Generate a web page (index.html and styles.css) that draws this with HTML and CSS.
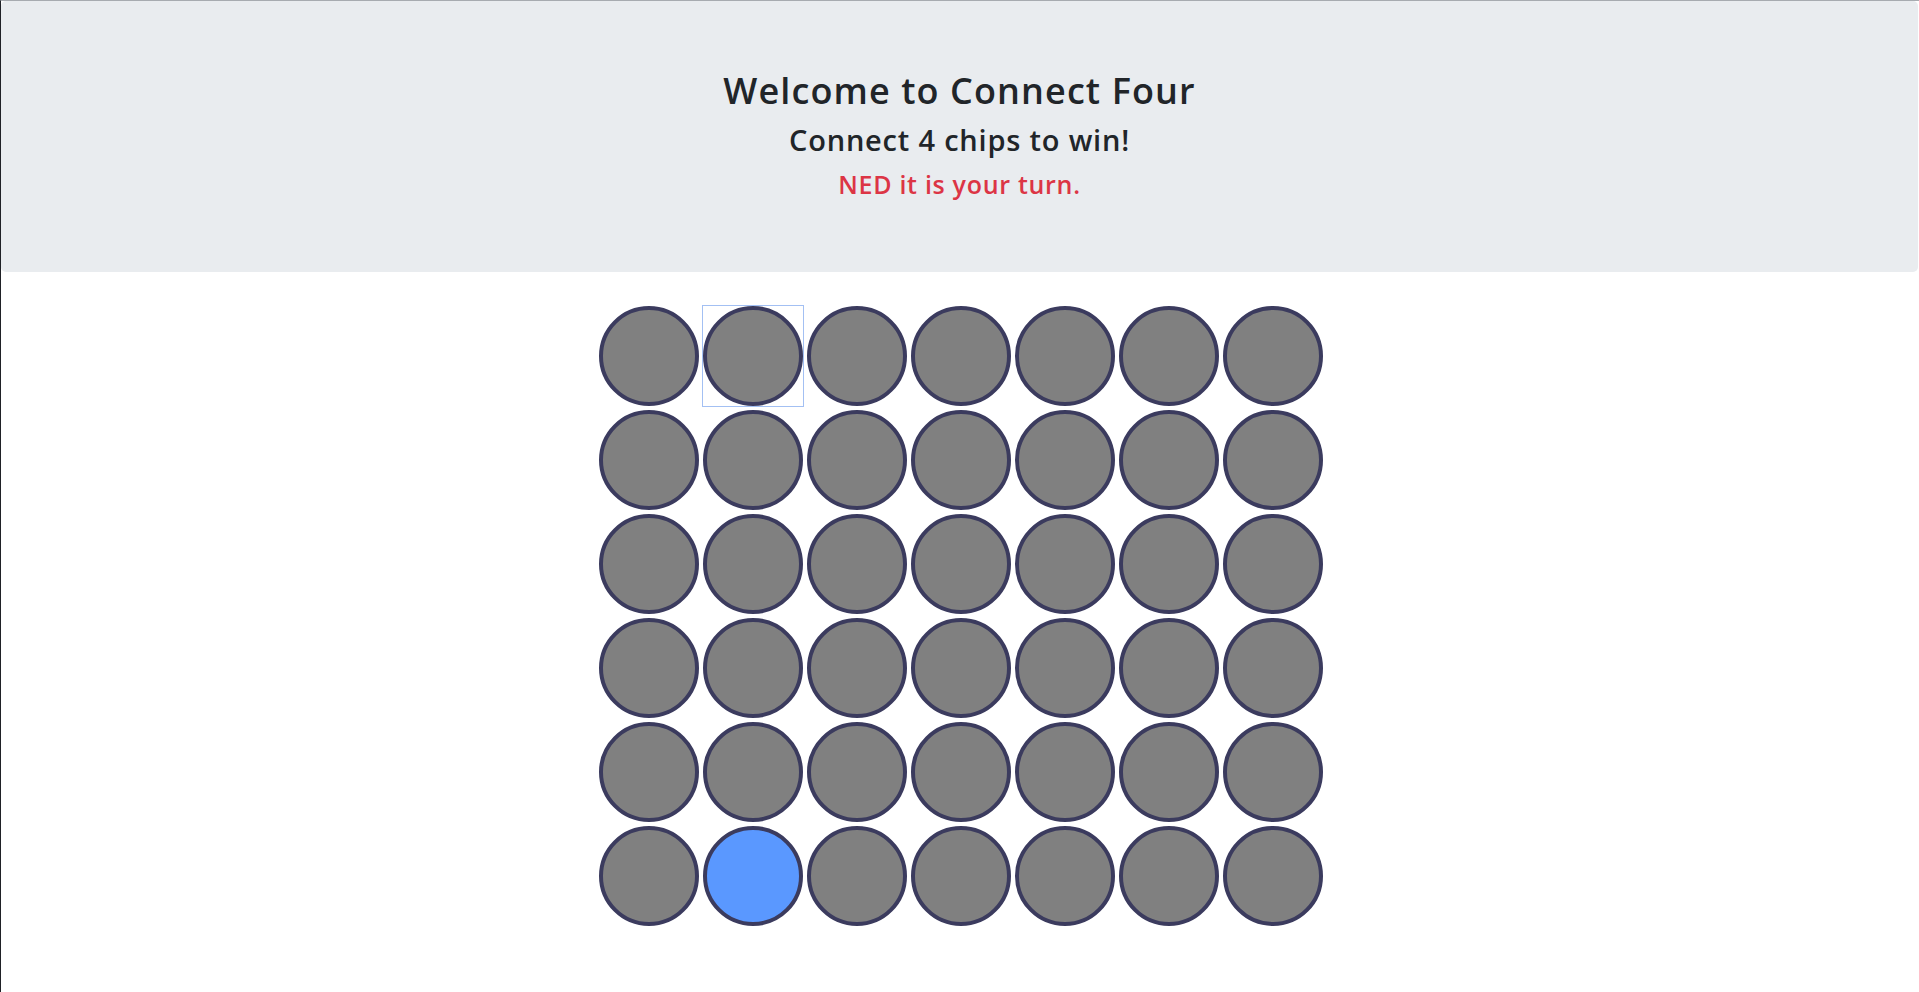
FILE: index.html
```html
<!DOCTYPE html>
<html lang="en">
<head>
<meta charset="utf-8">
<title>Connect Four</title>
<link rel="stylesheet" href="styles.css">
</head>
<body>
<header class="jumbotron">
  <h1 class="title">Welcome to Connect Four</h1>
  <h2 class="subtitle">Connect 4 chips to win!</h2>
  <h3 class="turn">NED it is your turn.</h3>
</header>
<main class="board-wrap">
  <div class="board">
    <div class="cell"><div class="chip"></div></div>
    <div class="cell focused"><div class="chip"></div></div>
    <div class="cell"><div class="chip"></div></div>
    <div class="cell"><div class="chip"></div></div>
    <div class="cell"><div class="chip"></div></div>
    <div class="cell"><div class="chip"></div></div>
    <div class="cell"><div class="chip"></div></div>

    <div class="cell"><div class="chip"></div></div>
    <div class="cell"><div class="chip"></div></div>
    <div class="cell"><div class="chip"></div></div>
    <div class="cell"><div class="chip"></div></div>
    <div class="cell"><div class="chip"></div></div>
    <div class="cell"><div class="chip"></div></div>
    <div class="cell"><div class="chip"></div></div>

    <div class="cell"><div class="chip"></div></div>
    <div class="cell"><div class="chip"></div></div>
    <div class="cell"><div class="chip"></div></div>
    <div class="cell"><div class="chip"></div></div>
    <div class="cell"><div class="chip"></div></div>
    <div class="cell"><div class="chip"></div></div>
    <div class="cell"><div class="chip"></div></div>

    <div class="cell"><div class="chip"></div></div>
    <div class="cell"><div class="chip"></div></div>
    <div class="cell"><div class="chip"></div></div>
    <div class="cell"><div class="chip"></div></div>
    <div class="cell"><div class="chip"></div></div>
    <div class="cell"><div class="chip"></div></div>
    <div class="cell"><div class="chip"></div></div>

    <div class="cell"><div class="chip"></div></div>
    <div class="cell"><div class="chip"></div></div>
    <div class="cell"><div class="chip"></div></div>
    <div class="cell"><div class="chip"></div></div>
    <div class="cell"><div class="chip"></div></div>
    <div class="cell"><div class="chip"></div></div>
    <div class="cell"><div class="chip"></div></div>

    <div class="cell"><div class="chip"></div></div>
    <div class="cell"><div class="chip blue"></div></div>
    <div class="cell"><div class="chip"></div></div>
    <div class="cell"><div class="chip"></div></div>
    <div class="cell"><div class="chip"></div></div>
    <div class="cell"><div class="chip"></div></div>
    <div class="cell"><div class="chip"></div></div>
  </div>
</main>
</body>
</html>
```

FILE: styles.css
```css
* {
  box-sizing: border-box;
}

html, body {
  margin: 0;
  padding: 0;
  background: #ffffff;
}

body {
  min-height: 992px;
  border-top: 1px solid #a7abb0;
  border-left: 1px solid #1f2126;
  font-family: "Open Sans", "Noto Sans", "Liberation Sans", sans-serif;
  color: #212529;
}

.jumbotron {
  background: #e9ecef;
  border-radius: 5px;
  margin: 0 1px 32px 0;
  padding: 69px 32px 73.1px;
  text-align: center;
}

.title,
.subtitle,
.turn {
  margin: 0;
  font-weight: 600;
  color: #212529;
}

.title {
  font-size: 36px;
  line-height: 42px;
  letter-spacing: 1.1px;
  margin-bottom: 10.3px;
}

.subtitle {
  font-size: 29px;
  line-height: 36px;
  letter-spacing: 0.8px;
  margin-bottom: 10.5px;
}

.turn {
  font-size: 25px;
  line-height: 30px;
  letter-spacing: 0.7px;
  color: #dc3545;
}

.board-wrap {
  display: flex;
  justify-content: center;
  padding-left: 2px;
}

.board {
  display: grid;
  grid-template-columns: repeat(7, 104px);
  grid-auto-rows: 104px;
}

.cell {
  width: 100px;
  height: 100px;
  margin: 2px;
}

.cell.focused {
  outline: 1px solid #a3c0f3;
}

.chip {
  width: 100px;
  height: 100px;
  border-radius: 50%;
  border: 4px solid #3b3b5e;
  background: #808080;
}

.chip.blue {
  background: #5a98ff;
}
```
